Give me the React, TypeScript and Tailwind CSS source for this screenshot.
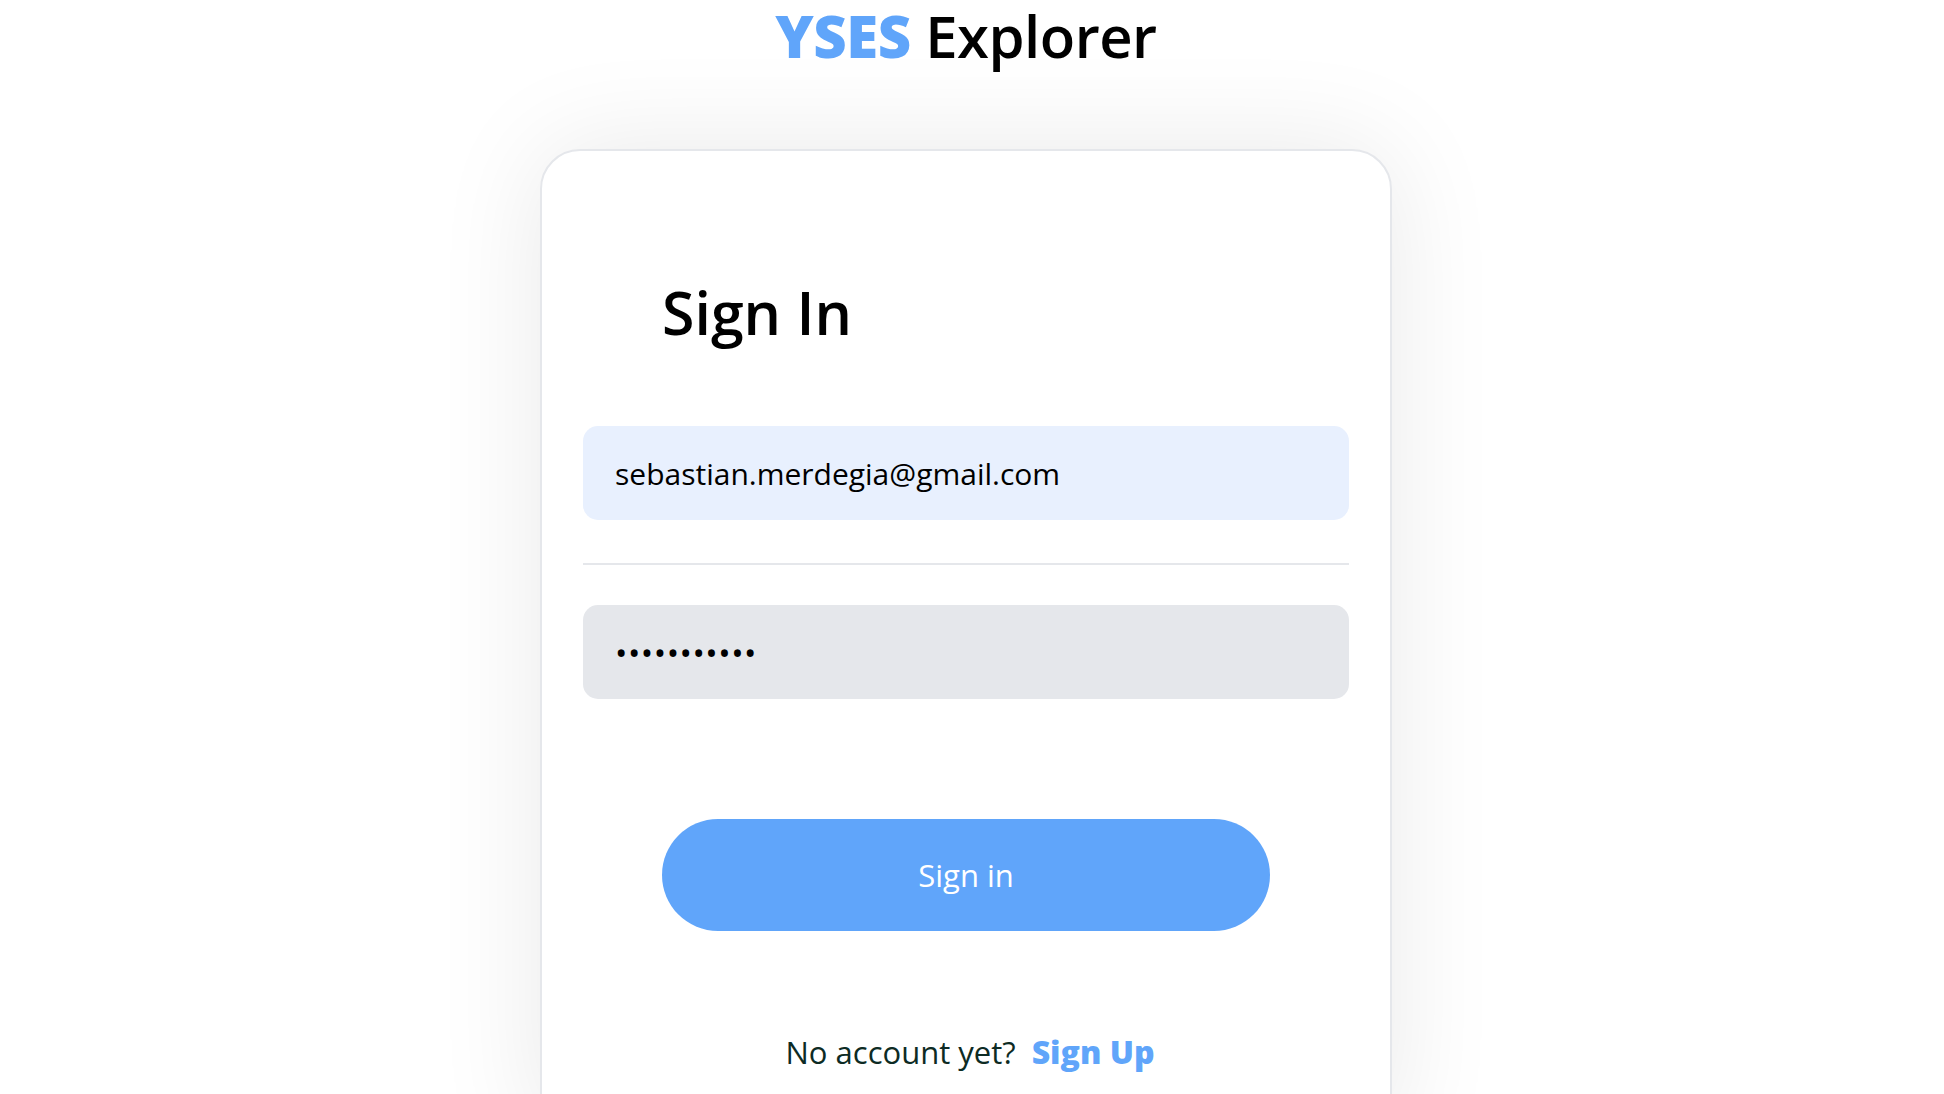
import { useState } from "react";

const font = { fontFamily: '"Open Sans", "Noto Sans", sans-serif' };

export default function App() {
  const [email, setEmail] = useState("sebastian.merdegia@gmail.com");
  const [password, setPassword] = useState("hunter2hunt");

  return (
    <div className="min-h-screen w-full bg-white flex flex-col items-center overflow-hidden pr-[12px]" style={font}>
      <h1 className="text-[58px] leading-[72px] font-semibold text-black tracking-[-0.5px]">
        <span className="text-[#60a5fa] font-extrabold">YSES</span> Explorer
      </h1>

      <div className="mt-[77px] w-[852px] border-2 border-[#e5e7eb] rounded-[40px] bg-white shadow-[0_0_110px_rgba(0,0,0,0.09)] px-[41px] pb-16">
        <h2 className="mt-[132px] pl-[79px] text-[59px] leading-none font-semibold text-black">
          Sign In
        </h2>

        <input
          type="email"
          value={email}
          onChange={(e) => setEmail(e.target.value)}
          className="mt-[84px] block w-full h-[94px] rounded-[15px] bg-[#e8f0fe] px-8 text-[30px] text-black outline-none"
        />

        <div className="mt-[43px] h-[2px] w-full bg-[#e5e7eb]" />

        <input
          type="password"
          value={password}
          onChange={(e) => setPassword(e.target.value)}
          className="mt-[40px] block w-full h-[94px] rounded-[15px] bg-[#e5e7eb] px-8 text-[33px] text-black outline-none tracking-[0.5px]"
        />

        <div className="mt-[120px] flex justify-center">
          <button className="w-[608px] h-[112px] rounded-full bg-[#60a5fa] text-white text-[31px]">
            Sign in
          </button>
        </div>

        <p className="mt-[98px] pl-[8px] text-center text-[31px] leading-[45px] text-[#0d2b24]">
          No account yet?
          <a href="#" className="ml-4 font-extrabold text-[32px] text-[#60a5fa]">
            Sign Up
          </a>
        </p>
      </div>
    </div>
  );
}
